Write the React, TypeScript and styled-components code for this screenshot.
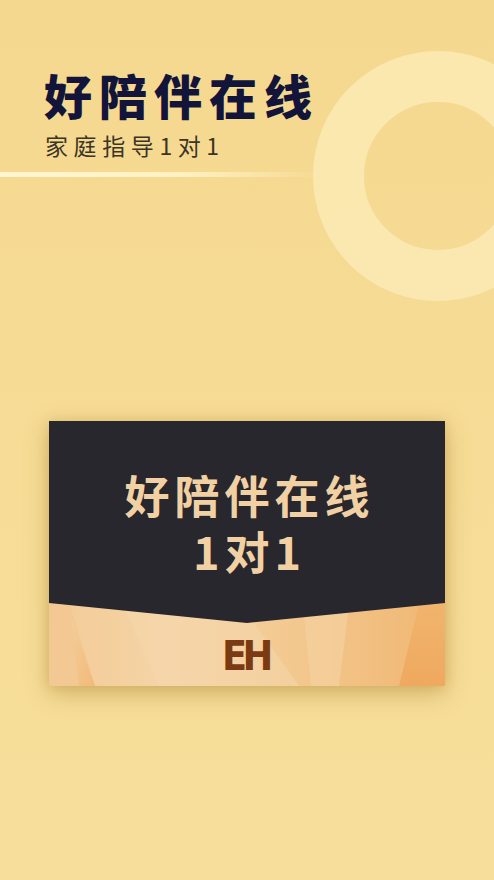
import React from "react";
import styled, { createGlobalStyle } from "styled-components";

const Global = createGlobalStyle`
  html, body { margin: 0; padding: 0; }
  body { background: #f6db94; }
`;

const Page = styled.div`
  position: relative;
  width: 494px;
  height: 880px;
  overflow: hidden;
  background: linear-gradient(180deg, #f5d88f 0%, #f6dc96 50%, #f7de9a 100%);
  font-family: "Noto Sans CJK SC", "Noto Sans", sans-serif;
`;

const Ring = styled.div`
  position: absolute;
  left: 313px;
  top: 51px;
  width: 148px;
  height: 148px;
  border-radius: 50%;
  border: 51px solid #fbe9b2;
  opacity: 0.92;
`;

const Header = styled.header`
  position: relative;
  display: flex;
  flex-direction: column;
  padding: 66px 0 0 44px;
`;

const Title = styled.h1`
  margin: 0;
  font-size: 48px;
  line-height: 56px;
  font-weight: 900;
  letter-spacing: 7px;
  color: #12143a;
`;

const Subtitle = styled.p`
  margin: 8px 0 0 1px;
  font-size: 23px;
  line-height: 30px;
  font-weight: 400;
  letter-spacing: 5.6px;
  color: #3b3526;
`;

const Rule = styled.div`
  width: 320px;
  height: 5px;
  margin: 12px 0 0 -44px;
  background: linear-gradient(90deg, #fff6d2 0%, #fff1c4 55%, rgba(255, 240, 190, 0) 100%);
`;

const Stage = styled.main`
  display: flex;
  justify-content: center;
  padding: 244px 0 0 0;
`;

const Card = styled.section`
  position: relative;
  width: 396px;
  height: 265px;
  display: flex;
  flex-direction: column;
  background: #f3cd9b;
  box-shadow: 0 8px 22px rgba(170, 130, 50, 0.45), 0 0 10px rgba(190, 150, 70, 0.3);
`;

const Facets = styled.svg`
  position: absolute;
  left: 0;
  bottom: 0;
  width: 396px;
  height: 90px;
`;

const DarkTop = styled.div`
  position: relative;
  height: 202px;
  background: #27272d;
  clip-path: polygon(0 0, 100% 0, 100% 182px, 50% 202px, 0 182px);
  display: flex;
  flex-direction: column;
  align-items: center;
  padding-top: 46px;
  box-sizing: border-box;
`;

const CardTitle = styled.h2`
  margin: 0;
  text-align: center;
  font-size: 45px;
  line-height: 56px;
  font-weight: 700;
  letter-spacing: 5px;
  color: #f1d1a3;
  padding-left: 5px;
`;

const Bottom = styled.div`
  position: relative;
  flex: 1;
  display: flex;
  justify-content: center;
  align-items: center;
  padding-top: 2px;
`;

const Mark = styled.span`
  font-family: "DejaVu Sans", "Noto Sans", sans-serif;
  font-size: 40px;
  line-height: 40px;
  font-weight: 700;
  letter-spacing: -5px;
  color: #7b3b12;
  transform: scaleX(0.92);
  margin-left: -4px;
`;

export default function App() {
  return (
    <Page>
      <Global />
      <Ring />
      <Header>
        <Title>好陪伴在线</Title>
        <Subtitle>家庭指导1对1</Subtitle>
        <Rule />
      </Header>
      <Stage>
        <Card>
          <Facets viewBox="0 0 396 90" preserveAspectRatio="none">
            <defs>
              <linearGradient id="base" x1="0" y1="0" x2="1" y2="0">
                <stop offset="0" stopColor="#f3cb96" />
                <stop offset="0.3" stopColor="#f5d4a6" />
                <stop offset="0.6" stopColor="#f3c990" />
                <stop offset="1" stopColor="#f0b672" />
              </linearGradient>
              <linearGradient id="wedge" x1="0" y1="0" x2="1" y2="1">
                <stop offset="0" stopColor="#f4cf9c" />
                <stop offset="1" stopColor="#f1b674" />
              </linearGradient>
              <linearGradient id="right" x1="0" y1="0" x2="0" y2="1">
                <stop offset="0" stopColor="#f1b56e" />
                <stop offset="1" stopColor="#efa95f" />
              </linearGradient>
            </defs>
            <rect x="0" y="0" width="396" height="90" fill="url(#base)" />
            <polygon points="0,0 18,0 46,90 0,90" fill="#f3c892" />
            <polygon points="22,20 46,90 30,90" fill="url(#wedge)" opacity="0.8" />
            <polygon points="70,0 200,20 250,90 110,90" fill="#f6d8ae" opacity="0.5" />
            <polygon points="255,20 300,10 290,90 262,90" fill="#f6d6a8" opacity="0.5" />
            <polygon points="372,0 396,0 396,90 350,90" fill="url(#right)" />
          </Facets>
          <DarkTop>
            <CardTitle>
              好陪伴在线
              <br />
              1对1
            </CardTitle>
          </DarkTop>
          <Bottom>
            <Mark>EH</Mark>
          </Bottom>
        </Card>
      </Stage>
    </Page>
  );
}
